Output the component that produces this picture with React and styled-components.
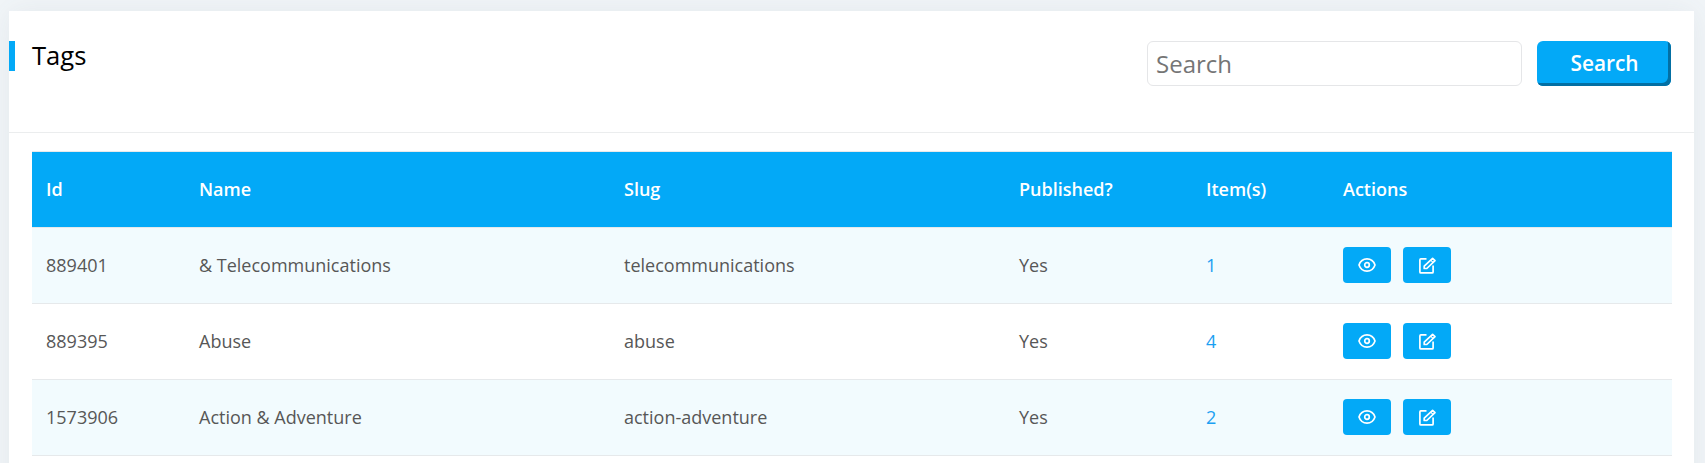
import React from "react";
import styled, { createGlobalStyle } from "styled-components";

const Global = createGlobalStyle`
  * { box-sizing: border-box; }
  body {
    margin: 0;
    background: #f1f5f8;
    font-family: "Open Sans", sans-serif;
    color: #575962;
    overflow: hidden;
  }
`;

const Page = styled.main`
  height: 463px;
  padding: 11px 11px 0 9px;
  overflow: hidden;
`;

const Card = styled.section`
  min-height: 600px;
  background: #fff;
  box-shadow: 0 0 28px rgba(82, 95, 105, 0.08);
`;

const CardHeader = styled.header`
  display: flex;
  align-items: flex-start;
  justify-content: space-between;
  height: 122px;
  padding: 30px 23px 0 0;
  border-bottom: 1px solid #ebedee;
`;

const Title = styled.h1`
  margin: 0;
  padding: 0 0 1px 17px;
  border-left: 6px solid #03a9f7;
  font-size: 25.6px;
  font-weight: 400;
  line-height: 29px;
  color: #000;
`;

const SearchForm = styled.form`
  display: flex;
  gap: 15px;
`;

const SearchInput = styled.input`
  width: 375px;
  height: 45px;
  padding: 0 8px;
  border: 1px solid #e5e6e8;
  border-radius: 6px;
  font: 400 24px "Open Sans", sans-serif;
  outline: none;
  &::placeholder { color: #757575; }
`;

const SearchButton = styled.button`
  width: 134px;
  height: 45px;
  padding: 0 0 1px 1px;
  border: 0;
  border-radius: 6px;
  background: #03a9f7;
  box-shadow: inset -3px -3px 0 #036fa3;
  color: #fff;
  font: 600 20.8px "Open Sans", sans-serif;
`;

const TableWrap = styled.div`
  padding: 18px 22px 0 23px;
`;

const Table = styled.table`
  width: 100%;
  table-layout: fixed;
  border-collapse: separate;
  border-spacing: 0;
  font-size: 18px;
  color: #575757;
`;

const Col = styled.col`
  width: ${(p) => (p.$w ? `${p.$w}px` : "auto")};
`;

const Row = styled.tr`
  height: 76px;
  &:nth-child(odd) { background: #f2fbfe; }
`;

const HeadCell = styled.th`
  height: 76px;
  padding: 0 14px 1px;
  border-top: 1px solid #e7e9eb;
  background: #03a9f7;
  background-clip: padding-box;
  color: #fff;
  font-weight: 600;
  text-align: left;
`;

const Cell = styled.td`
  padding: 0 14px 1px;
  border-top: 1px solid #e6e9eb;
`;

const ItemLink = styled.a`
  color: #1ba0f2;
  text-decoration: none;
`;

const Actions = styled.div`
  display: flex;
  gap: 12px;
`;

const ActionButton = styled.button`
  display: flex;
  align-items: center;
  justify-content: center;
  width: 48px;
  height: 36px;
  padding: 0;
  border: 0;
  border-radius: 4px;
  background: #03a9f7;
  color: #fff;
`;

const Icon = styled.svg`
  width: 20px;
  height: 20px;
  fill: none;
  stroke: currentColor;
  stroke-width: 1.7;
  stroke-linejoin: round;
`;

const EyeIcon = () => (
  <Icon viewBox="0 0 20 20">
    <path d="M2 10C3.300 6.200 6.300 3.900 10 3.900S16.700 6.200 18 10C16.700 13.800 13.700 16.100 10 16.100S3.300 13.800 2 10Z" />
    <circle cx="10" cy="10" r="2.300" />
  </Icon>
);

const EditIcon = () => (
  <Icon viewBox="0 0 20 20">
    <path d="M9.500 3.900H3.900Q2.900 3.900 2.900 4.900V16.900Q2.900 17.900 3.900 17.900H15.100Q16.100 17.900 16.100 16.900V10.500" />
    <path d="M15.600 3.300L18 5.700L9.800 13.500H7.200V11.200Z" />
    <path d="M13.700 5.200L16.100 7.500" strokeWidth="1.100" />
  </Icon>
);

const widths = [153, 425, 395, 187, 137, 0];
const headings = ["Id", "Name", "Slug", "Published?", "Item(s)", "Actions"];
const tags = [
  { id: 889401, name: "& Telecommunications", slug: "telecommunications", items: 1 },
  { id: 889395, name: "Abuse", slug: "abuse", items: 4 },
  { id: 1573906, name: "Action & Adventure", slug: "action-adventure", items: 2 },
];

export default function App() {
  return (
    <Page>
      <Global />
      <Card>
        <CardHeader>
          <Title>Tags</Title>
          <SearchForm>
            <SearchInput placeholder="Search" />
            <SearchButton type="button">Search</SearchButton>
          </SearchForm>
        </CardHeader>
        <TableWrap>
          <Table>
            <colgroup>{widths.map((w, i) => <Col key={i} $w={w} />)}</colgroup>
            <thead>
              <tr>{headings.map((h) => <HeadCell key={h}>{h}</HeadCell>)}</tr>
            </thead>
            <tbody>
              {tags.map((t) => (
                <Row key={t.id}>
                  <Cell>{t.id}</Cell>
                  <Cell>{t.name}</Cell>
                  <Cell>{t.slug}</Cell>
                  <Cell>Yes</Cell>
                  <Cell><ItemLink href="#">{t.items}</ItemLink></Cell>
                  <Cell>
                    <Actions>
                      <ActionButton aria-label="View"><EyeIcon /></ActionButton>
                      <ActionButton aria-label="Edit"><EditIcon /></ActionButton>
                    </Actions>
                  </Cell>
                </Row>
              ))}
              <Row><Cell colSpan={6} /></Row>
            </tbody>
          </Table>
        </TableWrap>
      </Card>
    </Page>
  );
}
